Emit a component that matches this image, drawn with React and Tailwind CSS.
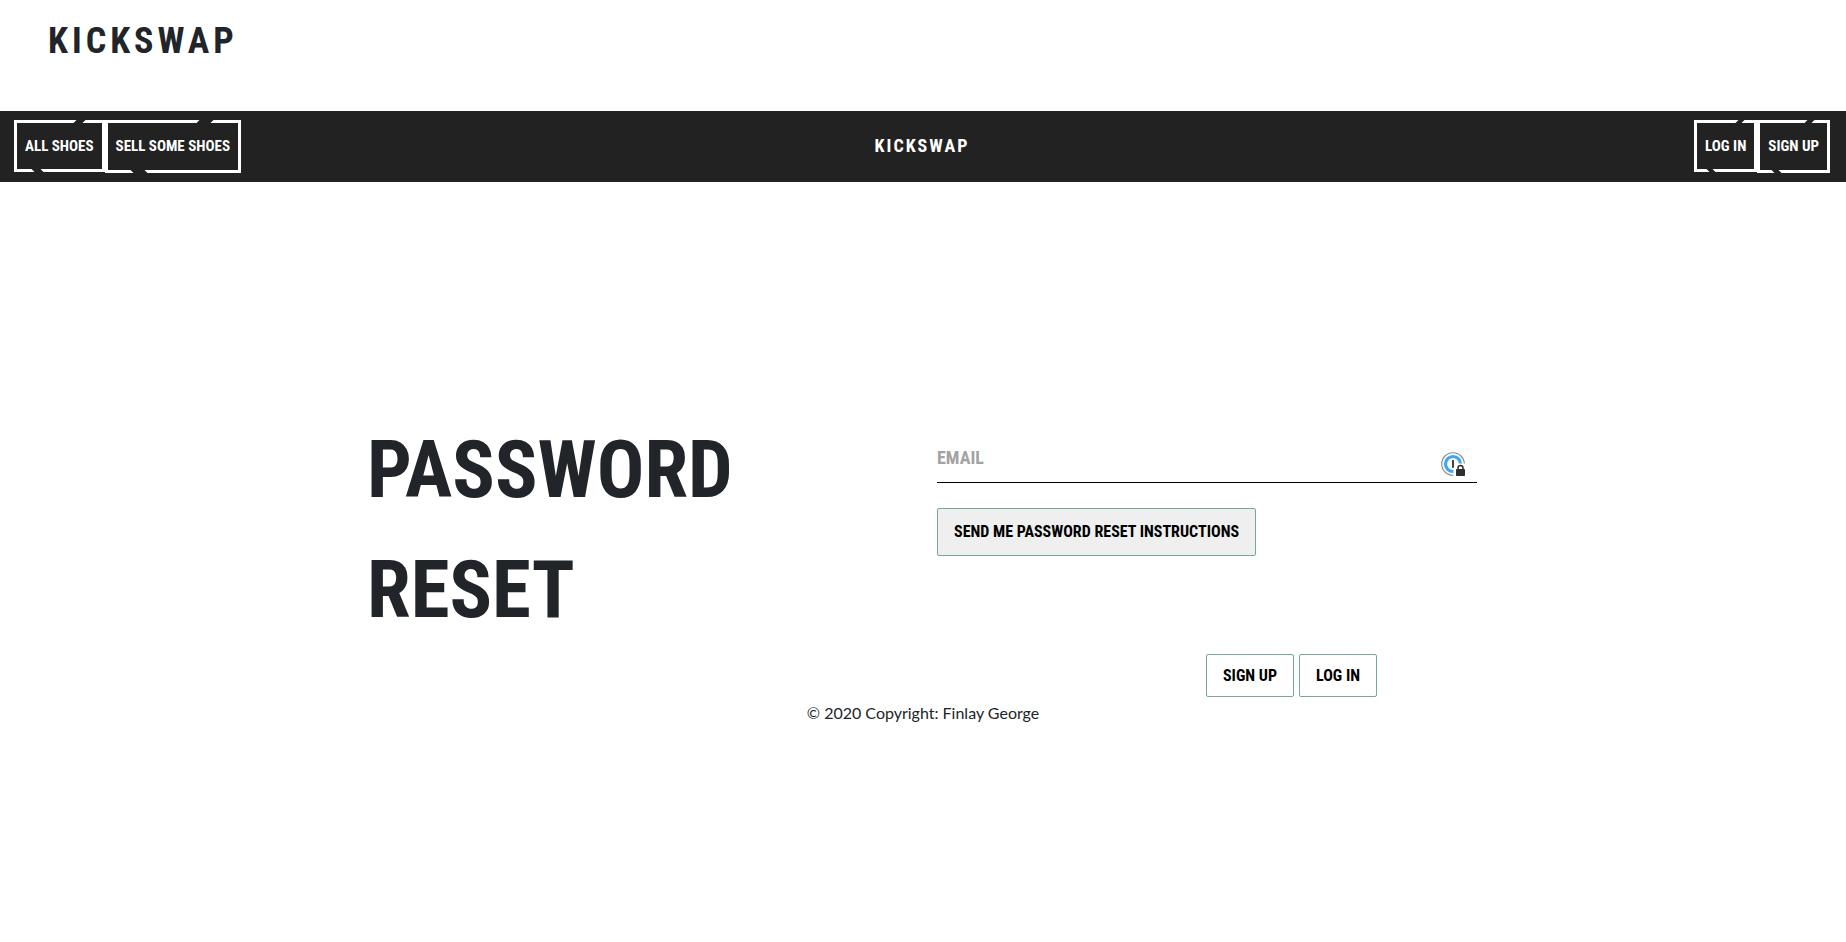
import React from "react";

const display = "font-['Roboto_Condensed','Liberation_Sans_Narrow','Liberation_Sans',sans-serif] font-bold";

function NavLink({ href, tall, children }) {
  return (
    <a
      href={href}
      className={`relative border-[3px] border-white px-2 text-[15px] leading-[46px] text-white ${tall ? "h-[53px]" : "h-[52px]"}`}
    >
      <span aria-hidden="true" className="absolute -top-[3px] left-[69%] h-[3px] w-[11%] -skew-x-45 bg-[#222]" />
      <span aria-hidden="true" className="absolute -bottom-[3px] left-[19%] h-[3px] w-[11%] skew-x-45 bg-[#222]" />
      {children}
    </a>
  );
}

function ManagerIcon() {
  return (
    <svg viewBox="0 0 24 24" className="h-6 w-6" aria-hidden="true">
      <circle cx="12" cy="12" r="11.3" fill="#fff" stroke="#8a8a8a" strokeWidth="1.1" />
      <circle cx="12" cy="12" r="7.5" fill="#fff" stroke="#3ba7f5" strokeWidth="3.2" />
      <rect x="11" y="8" width="2" height="8" fill="#444" />
      <path d="M17 11.5h7V24H12.5v-8.500l4.500-4z" fill="#fff" />
      <rect x="15" y="17" width="9" height="7" rx="0.8" fill="#2e2e2e" />
      <path d="M17 18v-2a2.500 2.500 0 0 1 5 0v2" fill="none" stroke="#2e2e2e" strokeWidth="1.5" />
    </svg>
  );
}

export default function App() {
  return (
    <div className="min-h-screen bg-white text-[#212529]">
      <header className="h-[111px] px-12 pt-[17px]">
        <a href="#" className={`${display} text-[36px] leading-[48px] tracking-[4px]`}>KICKSWAP</a>
      </header>

      <nav className={`${display} grid h-[71px] grid-cols-[1fr_auto_1fr] bg-[#222] pt-[9px] pr-4 pl-[14px]`}>
        <div className="flex items-start">
          <NavLink href="#shoes">ALL SHOES</NavLink>
          <NavLink href="#sell" tall>SELL SOME SHOES</NavLink>
        </div>
        <a href="#" className="h-[52px] text-[18px] leading-[52px] tracking-[2px] text-white">KICKSWAP</a>
        <div className="flex items-start justify-end">
          <NavLink href="#login">LOG IN</NavLink>
          <NavLink href="#signup" tall>SIGN UP</NavLink>
        </div>
      </nav>

      <main className="mx-auto grid max-w-[1140px] grid-cols-2 pt-[228px]">
        <h1 className={`${display} px-[14px] text-[79px] leading-[120px]`}>
          PASSWORD
          <br />
          RESET
        </h1>
        <div className={`${display} pt-[26px] pr-4 pl-[14px]`}>
          <form onSubmit={(e) => e.preventDefault()}>
            <div className="relative">
              <input
                type="email"
                aria-label="Email"
                placeholder="EMAIL"
                className="block h-[47px] w-full border-b border-black pb-1 text-[18px] outline-none placeholder:text-[#a3a3a3]"
              />
              <span className="absolute top-4 right-3">
                <ManagerIcon />
              </span>
            </div>
            <button type="submit" className="mt-[25px] h-12 rounded-[2px] border border-[#76a8a0] bg-[#efefef] px-4 text-[16px] text-black">
              SEND ME PASSWORD RESET INSTRUCTIONS
            </button>
          </form>
          <div className="mt-[98px] mr-[100px] flex justify-end gap-[5px] text-[16px] text-black">
            <a href="#signup" className="flex h-[43px] items-center rounded-[2px] border border-[#76a8a0] px-4">SIGN UP</a>
            <a href="#login" className="flex h-[43px] items-center rounded-[2px] border border-[#76a8a0] px-4">LOG IN</a>
          </div>
        </div>
      </main>

      <footer className="pt-1 text-center font-['Lato',sans-serif] text-[16px] leading-6">© 2020 Copyright: Finlay George</footer>
    </div>
  );
}
